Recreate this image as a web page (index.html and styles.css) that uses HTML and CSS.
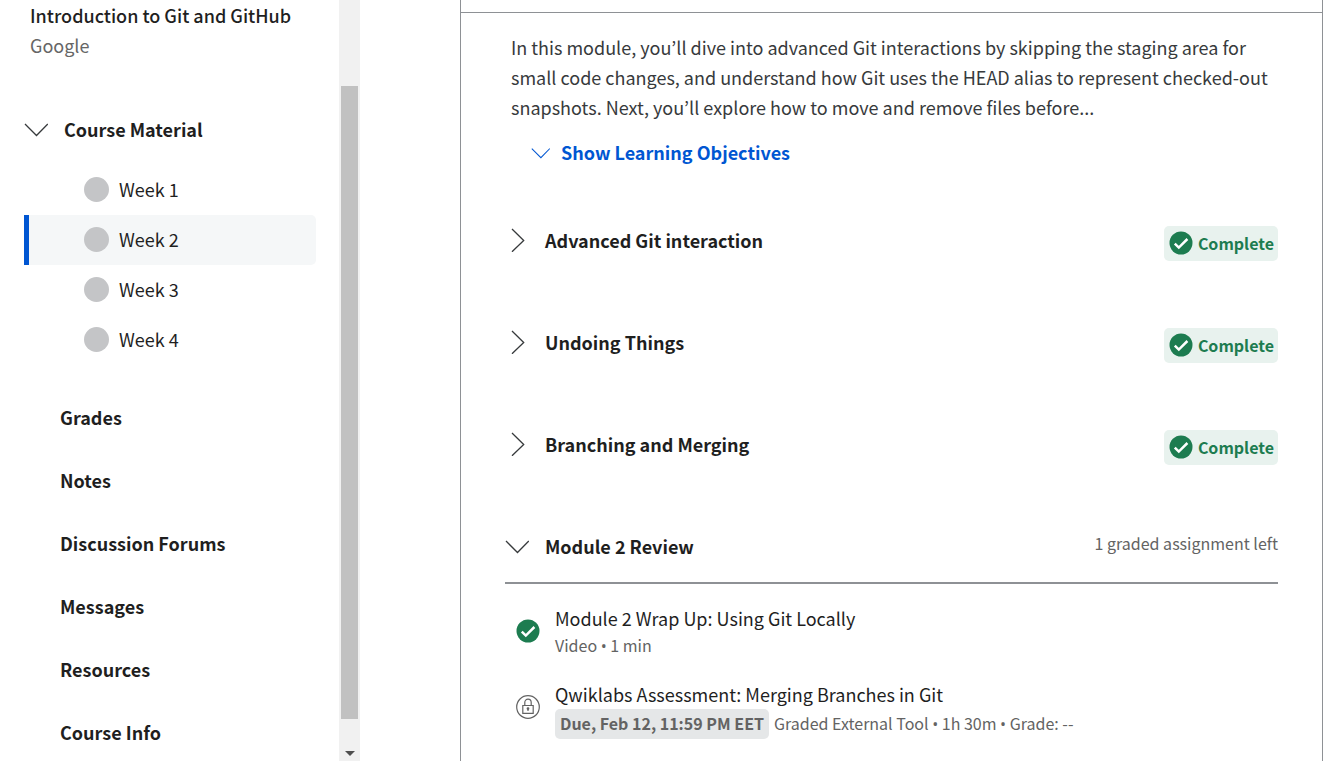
FILE: index.html
```html
<!DOCTYPE html>
<html lang="en">
<head>
<meta charset="utf-8">
<title>Introduction to Git and GitHub</title>
<link rel="stylesheet" href="styles.css">
</head>
<body>
<svg class="sprite" aria-hidden="true">
  <symbol id="chevron-down" viewBox="0 0 24 24"><path d="M1 7 12.5 18.5 23.8 7" fill="none" stroke="currentColor" stroke-width="1.3"/></symbol>
  <symbol id="chevron-right" viewBox="0 0 24 24"><path d="M7 1 18.7 12.5 7 23.8" fill="none" stroke="currentColor" stroke-width="1.3"/></symbol>
  <symbol id="check" viewBox="0 0 24 24"><circle cx="12" cy="12" r="11.5" fill="currentColor"/><path d="m5.8 12.6 4 4 8.6-8.6" fill="none" stroke="#fff" stroke-width="2.5"/></symbol>
  <symbol id="lock" viewBox="0 0 24 24" fill="none" stroke="currentColor" stroke-width="1.2"><circle cx="12" cy="12" r="11.3"/><path d="M6.8 10.5h10.4v7.8H6.8zM8.8 10.5V7.4a3.2 3.2 0 0 1 6.4 0v3.1"/><circle cx="12" cy="13.6" r=".8" fill="currentColor"/><path d="M12 13.6v2.4"/></symbol>
</svg>
<div class="layout">
  <aside class="sidebar">
    <div class="course">
      <h1 class="course-title">Introduction to Git and GitHub</h1>
      <p class="course-org">Google</p>
    </div>
    <nav class="menu">
      <button class="menu-toggle" type="button" aria-expanded="true"><svg class="icon"><use href="#chevron-down"/></svg>Course Material</button>
      <ul class="weeks">
        <li><a class="week" href="#week1"><span class="dot"></span>Week 1</a></li>
        <li><a class="week week-active" href="#week2" aria-current="page"><span class="dot"></span>Week 2</a></li>
        <li><a class="week" href="#week3"><span class="dot"></span>Week 3</a></li>
        <li><a class="week" href="#week4"><span class="dot"></span>Week 4</a></li>
      </ul>
      <ul class="links">
        <li><a class="link" href="#grades">Grades</a></li>
        <li><a class="link" href="#notes">Notes</a></li>
        <li><a class="link" href="#forums">Discussion Forums</a></li>
        <li><a class="link" href="#messages">Messages</a></li>
        <li><a class="link" href="#resources">Resources</a></li>
        <li><a class="link" href="#info">Course Info</a></li>
      </ul>
    </nav>
  </aside>
  <div class="scrollbar" aria-hidden="true">
    <div class="scroll-before"></div>
    <div class="scroll-thumb"></div>
    <div class="scroll-after"><svg class="scroll-arrow" viewBox="0 0 10 5"><path d="M0 0h10L5 5z" fill="#505050"/></svg></div>
  </div>
  <main class="main">
    <section class="card">
      <div class="card-head"></div>
      <div class="card-body">
        <p class="summary">In this module, you’ll dive into advanced Git interactions by skipping the staging area for small code changes, and understand how Git uses the HEAD alias to represent checked-out snapshots. Next, you’ll explore how to move and remove files before...</p>
        <button class="objectives" type="button"><svg class="icon-small"><use href="#chevron-down"/></svg>Show Learning Objectives</button>
        <div class="lesson">
          <button class="lesson-toggle" type="button" aria-expanded="false"><svg class="icon"><use href="#chevron-right"/></svg>Advanced Git interaction</button>
          <span class="badge"><svg class="badge-icon"><use href="#check"/></svg>Complete</span>
        </div>
        <div class="lesson">
          <button class="lesson-toggle" type="button" aria-expanded="false"><svg class="icon"><use href="#chevron-right"/></svg>Undoing Things</button>
          <span class="badge"><svg class="badge-icon"><use href="#check"/></svg>Complete</span>
        </div>
        <div class="lesson">
          <button class="lesson-toggle" type="button" aria-expanded="false"><svg class="icon"><use href="#chevron-right"/></svg>Branching and Merging</button>
          <span class="badge"><svg class="badge-icon"><use href="#check"/></svg>Complete</span>
        </div>
        <div class="lesson lesson-open">
          <button class="lesson-toggle" type="button" aria-expanded="true"><svg class="icon"><use href="#chevron-down"/></svg>Module 2 Review</button>
          <span class="remaining">1 graded assignment left</span>
        </div>
        <ul class="items">
          <li class="item">
            <svg class="icon item-icon done"><use href="#check"/></svg>
            <div><a class="item-title" href="#wrap-up">Module 2 Wrap Up: Using Git Locally</a>
            <p class="item-meta"><span>Video <span class="bullet">•</span> 1 min</span></p></div>
          </li>
          <li class="item">
            <svg class="icon item-icon"><use href="#lock"/></svg>
            <div><a class="item-title" href="#assessment">Qwiklabs Assessment: Merging Branches in Git</a>
            <p class="item-meta"><strong class="due">Due, Feb 12, 11:59 PM EET</strong><span>Graded External Tool <span class="bullet">•</span> 1h 30m <span class="bullet">•</span> Grade: --</span></p></div>
          </li>
        </ul>
      </div>
    </section>
  </main>
</div>
</body>
</html>
```
FILE: styles.css
```css
* { box-sizing: border-box; }

body {
  margin: 0;
  background: #fff;
  color: #1f1f1f;
  font-family: "Noto Sans CJK KR", "Open Sans", sans-serif;
  font-size: 18px;
  line-height: 30px;
}

h1, p, ul { margin: 0; padding: 0; }
ul { list-style: none; }
a { color: inherit; text-decoration: none; }

button {
  display: flex;
  align-items: center;
  padding: 0;
  border: 0;
  background: none;
  color: inherit;
  font: inherit;
  font-weight: 700;
  cursor: pointer;
}

.sprite { position: absolute; width: 0; height: 0; }
.icon { flex: none; width: 24px; height: 24px; }
.icon-small { flex: none; width: 19px; height: 19px; }

.layout { display: flex; height: 100vh; overflow: hidden; }

/* Sidebar */
.sidebar { flex: none; width: 339px; padding: 0 23px 0 24px; overflow: hidden; }
.course { padding-left: 6px; }
.course-title { font-size: 18px; font-weight: 500; }
.course-org { color: #666; }
.menu { padding-top: 54px; }
.menu-toggle { gap: 16px; }
.menu-toggle .icon { color: #373a3c; }
.weeks { padding-top: 21px; }
.week {
  display: flex;
  align-items: center;
  gap: 10px;
  height: 50px;
  padding: 0 0 2px 55px;
  border-left: 5px solid transparent;
  border-radius: 0 5px 5px 0;
}
.week-active { border-left-color: #0056d2; background: #f5f7f8; }
.dot { width: 25px; height: 25px; border-radius: 50%; background: #c4c5c7; }
.links { padding: 21px 0 0 36px; }
.link { display: block; font-weight: 700; line-height: 63px; }

/* Scrollbar */
.scrollbar { display: flex; flex: none; flex-direction: column; width: 21px; padding: 0 2px; background: #f1f1f1; }
.scroll-before { flex: 86; }
.scroll-thumb { flex: 633; background: #c1c1c1; }
.scroll-after { display: flex; flex: 42; align-items: flex-end; justify-content: center; }
.scroll-arrow { width: 10px; height: 5px; margin-bottom: 5px; }

/* Module card */
.main { flex: 1; min-width: 0; padding: 0 15px 0 100px; }
.card { min-height: 100vh; border: solid #8e9195; border-width: 0 1px; }
.card-head { height: 13px; border-bottom: 1px solid #8e9195; }
.card-body { padding: 19px 44px; }
.summary { padding-left: 6px; color: #373a3c; }
.objectives { gap: 11px; margin: 15px 0 23px 26px; color: #0056d2; }

.lesson { display: flex; align-items: flex-start; justify-content: space-between; min-height: 102px; padding-top: 36px; }
.lesson-toggle { gap: 16px; line-height: 28px; }
.lesson-toggle .icon { color: #373a3c; }
.lesson-open { min-height: 88px; border-bottom: 2px solid #8e9195; }
.badge {
  display: flex;
  align-items: center;
  gap: 5px;
  height: 35px;
  padding: 0 4px 2px 5px;
  border-radius: 5px;
  background: #e8f2ee;
  color: #1d7c50;
  font-size: 16px;
  font-weight: 700;
}
.badge-icon { flex: none; width: 24px; height: 24px; }
.remaining { color: #636363; font-size: 16px; line-height: 22px; }

.items { display: grid; gap: 21px; padding-top: 19px; }
.item { display: flex; align-items: flex-start; gap: 15px; padding-left: 11px; }
.item-icon { margin-top: 16px; color: #636363; }
.done { color: #1d7c50; }
.item-title { display: block; }
.item-meta { display: flex; align-items: baseline; gap: 5px; color: #636363; font-size: 16px; line-height: 24px; }
.bullet { font-family: "Open Sans", sans-serif; }
.due { padding: 0 5px 2px; border-radius: 5px; background: #e5e7e8; line-height: 28px; }
```
